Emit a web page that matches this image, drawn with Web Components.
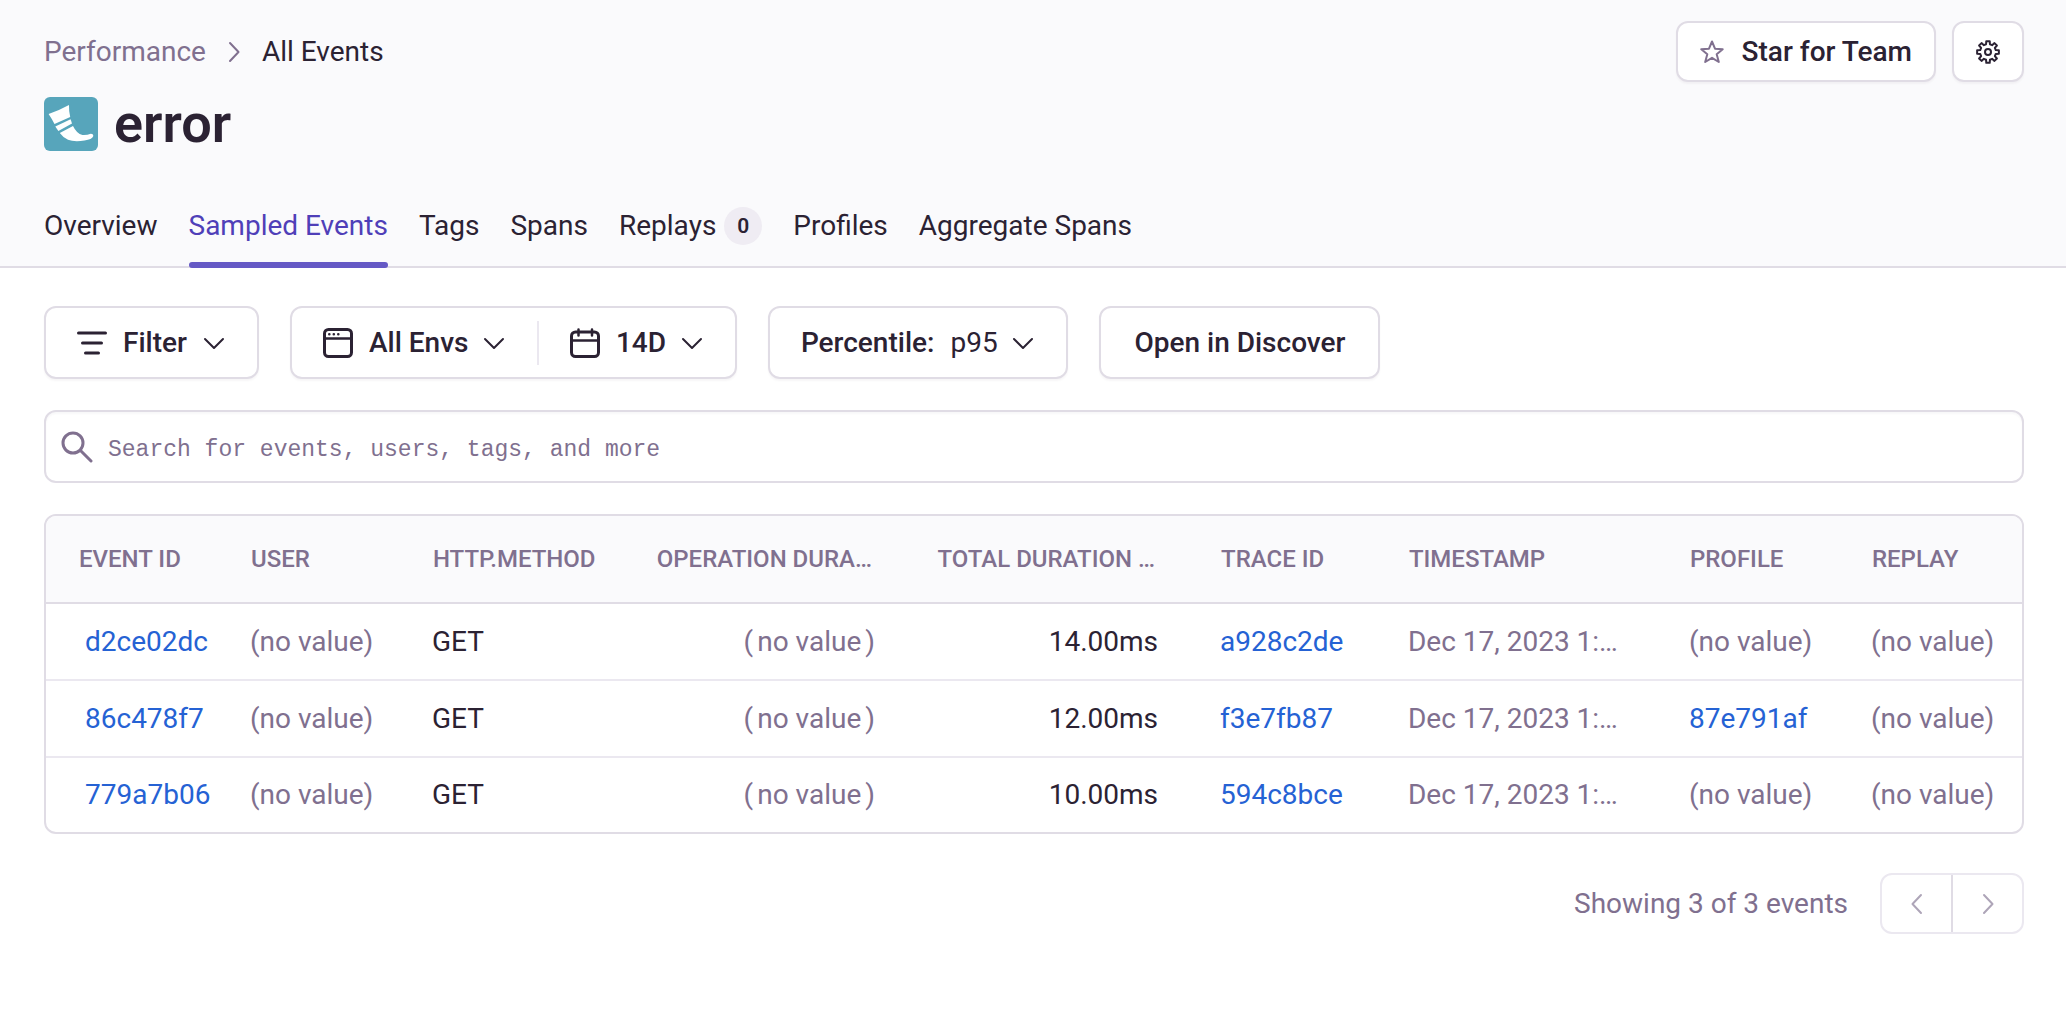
<!DOCTYPE html>
<html lang="en">
<head>
<meta charset="utf-8">
<title>error – All Events</title>
<meta name="viewport" content="width=device-width, initial-scale=1">
<style>
  :root {
    --text: #2b2233;
    --muted: #80708f;
    --link: #2562d4;
    --active: #4f3fb8;
    --accent: #6559c5;
    --border: #e0dce5;
    --inner-border: #ebe8f0;
    --panel: #fafafc;
  }
  html, body { margin: 0; min-height: 100%; background: #fff; }
  body { font: 400 28px/32px Roboto, "Liberation Sans", sans-serif; color: var(--text); }
</style>
</head>
<body>
<transaction-page></transaction-page>

<template id="t-page">
  <style>
    :host { display: block; }
    header { background: var(--panel); padding: 21px 42px 0 44px; box-shadow: inset 0 -2px var(--border); }
    .top, .title, .actions, .filters { display: flex; align-items: center; }
    .top { justify-content: space-between; }
    .actions { gap: 16px; }
    .title { gap: 16px; margin-top: 15px; }
    h1 { margin: 0; font-size: 54px; line-height: 54px; font-weight: 600; }
    .logo { display: block; width: 54px; height: 54px; }
    page-tabs { margin-top: 33px; }
    main { display: flex; flex-direction: column; gap: 31px; padding: 38px 42px 0 44px; }
    .filters { gap: 31px; }
    table-pager { margin-top: 8px; }
  </style>
  <header>
    <div class="top">
      <page-breadcrumbs></page-breadcrumbs>
      <div class="actions">
        <action-button icon="star">Star for Team</action-button>
        <action-button icon="gear" label="Settings"></action-button>
      </div>
    </div>
    <div class="title">
      <svg class="logo" viewBox="0 0 54 54" aria-hidden="true">
        <rect width="54" height="54" rx="6" fill="#57a5bb"/>
        <g fill="#fff">
          <path d="M4.6 17 Q15 13.500 25 8 Q24.800 14 26.200 20 L10.500 27 Q8 22 4.600 17Z"/>
          <path d="M11.300 29.500 L26.600 22.300 L28 26.500 L14.400 34 Z"/>
          <path d="M15.800 36 L29 29 Q32.500 36.500 38.500 38 Q43 38.300 46.800 36.700 Q49.700 36.800 49.200 39.300 Q48 42.500 40.500 43.600 Q30 45.200 24 42.800 Q19 40.500 15.800 36Z"/>
        </g>
      </svg>
      <h1>error</h1>
    </div>
    <page-tabs></page-tabs>
  </header>
  <main>
    <div class="filters">
      <filter-group><filter-button></filter-button></filter-group>
      <filter-group>
        <filter-select icon="window" value="All Envs" label="Environment"></filter-select>
        <filter-select icon="calendar" value="14D" label="Date range" divided></filter-select>
      </filter-group>
      <filter-group><filter-select value="p95" label="Percentile:" show-label></filter-select></filter-group>
      <filter-group><discover-link></discover-link></filter-group>
    </div>
    <event-search></event-search>
    <events-table></events-table>
    <table-pager></table-pager>
  </main>
</template>

<script>
const gearPath = (() => {
  const pts = [];
  for (let i = 0; i < 8; i++) {
    const base = i * 45 - 90;
    for (const [offset, radius] of [[-14, 8], [-9, 11], [9, 11], [14, 8]]) {
      const a = (base + offset) * Math.PI / 180;
      pts.push((12 + radius * Math.cos(a)).toFixed(2) + ' ' + (12 + radius * Math.sin(a)).toFixed(2));
    }
  }
  return 'M' + pts.join('L') + 'Z';
})();

const icon = (name, size, viewBox, body) =>
  `<svg class="${name}" width="${size}" height="${size}" viewBox="0 0 ${viewBox} ${viewBox}" fill="none" stroke="currentColor" stroke-linecap="round" stroke-linejoin="round" aria-hidden="true">${body}</svg>`;

const icons = {
  star: icon('star', 24, 24, '<path stroke-width="2" d="M12 1.500L15 8.700L22.700 9.200L16.700 14.200L18.800 22L12 17.800L5.200 22L7.300 14.200L1.300 9.200L9 8.700Z"/>'),
  gear: icon('gear', 24, 24, `<path stroke-width="2" d="${gearPath}"/><circle cx="12" cy="12" r="3" stroke-width="2"/>`),
  filter: icon('lines', 30, 30, '<path stroke-width="3" d="M1.500 5H28.500M5.500 15H24.500M8.500 25H21.500"/>'),
  window: icon('window', 30, 30, '<rect x="1.500" y="1.500" width="27" height="27" rx="4" stroke-width="3"/><path stroke-width="2.500" d="M2 10.500H28"/><path stroke-width="2.600" d="M6.300 6.200h.01M10.800 6.200h.01M15.300 6.200h.01"/>'),
  calendar: icon('calendar', 30, 30, '<rect x="1.500" y="4" width="27" height="24.500" rx="4" stroke-width="3"/><path stroke-width="2.500" d="M2 12.500H28M8.500 1.500V7.500M22 1.500V7.500"/>'),
  down: icon('down', 24, 24, '<path stroke-width="2" d="M3 8L12 17L21 8"/>'),
  left: icon('left', 24, 24, '<path stroke-width="2" d="M16 3L7.500 12L16 21"/>'),
  right: icon('right', 24, 24, '<path stroke-width="2" d="M8 3L16.500 12L8 21"/>'),
  search: icon('search', 32, 32, '<circle cx="12" cy="12" r="10" stroke-width="3"/><path stroke-width="3" d="M19.500 19.500L30 30"/>')
};

const shared = `<style>
  *, ::before, ::after { box-sizing: border-box; }
  button, select, input { font: inherit; color: inherit; background: none; border: 0; margin: 0; padding: 0; border-radius: 0; outline: 0; appearance: none; }
  button, select { cursor: pointer; }
  a { color: inherit; text-decoration: none; }
  svg { display: block; flex: none; }
</style>`;

const define = (name, render) => customElements.define(name, class extends HTMLElement {
  connectedCallback() {
    if (this.shadowRoot) return;
    this.attachShadow({ mode: 'open' }).innerHTML = shared + render(this);
  }
});

define('page-breadcrumbs', () => `
  <style>
    :host { display: block; }
    nav { display: flex; align-items: center; gap: 16px; }
    a, svg { color: var(--muted); }
  </style>
  <nav aria-label="Breadcrumb"><a href="#">Performance</a>${icons.right}<span aria-current="page">All Events</span></nav>`);

define('action-button', el => `
  <style>
    :host { display: block; }
    button { display: flex; align-items: center; justify-content: center; gap: 18px; height: 61px; padding: 0 22px; font-weight: 500; background: #fff; border: 2px solid var(--border); border-radius: 12px; box-shadow: 0 2px 2px rgba(43, 34, 51, .04); }
    .star { color: var(--muted); }
  </style>
  <button type="button"${el.getAttribute('label') ? ` aria-label="${el.getAttribute('label')}"` : ''}>${icons[el.getAttribute('icon')]}${el.getAttribute('label') ? '' : '<slot></slot>'}</button>`);

define('page-tabs', () => {
  const tabs = ['Overview', 'Sampled Events', 'Tags', 'Spans', 'Replays', 'Profiles', 'Aggregate Spans'];
  return `
  <style>
    :host { display: block; }
    nav { display: flex; gap: 31px; }
    a { position: relative; display: flex; align-items: center; gap: 8px; height: 84px; white-space: nowrap; }
    a[aria-current] { color: var(--active); }
    a[aria-current]::after { content: ""; position: absolute; left: 0; right: 0; bottom: 0; height: 6px; border-radius: 3px; background: var(--accent); }
    .badge { display: grid; place-items: center; width: 38px; height: 38px; border-radius: 50%; background: #efecf3; font-size: 21px; font-weight: 600; }
  </style>
  <nav>${tabs.map(t => `<a href="#"${t === 'Sampled Events' ? ' aria-current="page"' : ''}>${t}${t === 'Replays' ? '<span class="badge">0</span>' : ''}</a>`).join('')}</nav>`;
});

define('filter-group', () => `
  <style>
    :host { display: flex; align-items: center; box-sizing: border-box; height: 73px; background: #fff; border: 2px solid var(--border); border-radius: 12px; box-shadow: 0 2px 2px rgba(43, 34, 51, .04); font-weight: 500; white-space: nowrap; }
  </style><slot></slot>`);

define('filter-button', () => `
  <style>
    :host { display: block; }
    button { display: flex; align-items: center; gap: 16px; height: 69px; padding: 0 31px; }
    .down { margin-left: -1px; }
  </style>
  <button type="button">${icons.filter}Filter${icons.down}</button>`);

define('filter-select', el => {
  const shown = el.hasAttribute('show-label');
  const label = el.getAttribute('label');
  return `
  <style>
    :host { display: flex; align-items: center; }
    :host([divided])::before { content: ""; width: 2px; height: 44px; background: var(--inner-border); }
    label { display: flex; align-items: center; gap: 16px; padding: 0 31px; }
    .down { margin-left: -3px; }
    select { line-height: 32px; }
    .light { font-weight: 400; }
  </style>
  <label>${shown ? `<span>${label}</span>` : icons[el.getAttribute('icon')]}<select${shown ? ' class="light"' : ` aria-label="${label}"`}><option>${el.getAttribute('value')}</option></select>${icons.down}</label>`;
});

define('discover-link', () => `
  <style>
    :host { display: block; }
    a { display: block; padding: 0 33px; }
  </style>
  <a href="#">Open in Discover</a>`);

define('event-search', () => `
  <style>
    :host { display: block; }
    label { display: flex; align-items: center; gap: 15px; height: 73px; padding: 0 15px; border: 2px solid var(--border); border-radius: 12px; box-shadow: inset 0 2px 2px rgba(43, 34, 51, .03); color: var(--muted); }
    input { flex: 1; min-width: 0; padding-top: 6px; font: 400 23px/32px "Liberation Mono", monospace; color: var(--text); }
    input::placeholder { color: var(--muted); opacity: 1; }
  </style>
  <label>${icons.search}<input type="text" aria-label="Search events" placeholder="Search for events, users, tags, and more"></label>`);

define('events-table', () => {
  const columns = [['EVENT ID', 172], ['USER', 182], ['HTTP.METHOD', 226], ['OPERATION DURA…', 279, 1], ['TOTAL DURATION …', 283, 1], ['TRACE ID', 188], ['TIMESTAMP', 281], ['PROFILE', 182], ['REPLAY', 183]];
  const total = columns.reduce((sum, c) => sum + c[1], 0);
  const none = '<span class="muted">(no value)</span>';
  const spaced = '<span class="muted">(<span class="inset">no value</span>)</span>';
  const link = id => `<a href="#">${id}</a>`;
  const rows = [['d2ce02dc', '14.00ms', 'a928c2de', null], ['86c478f7', '12.00ms', 'f3e7fb87', '87e791af'], ['779a7b06', '10.00ms', '594c8bce', null]];
  return `
  <style>
    :host { display: block; border: 2px solid var(--border); border-radius: 12px; overflow: hidden; }
    table { width: 100%; table-layout: fixed; border-collapse: separate; border-spacing: 0; }
    th, td { text-align: left; white-space: nowrap; padding: 0 0 0 32px; font-weight: 400; }
    th { height: 88px; padding-left: 33px; background: var(--panel); border-bottom: 2px solid var(--border); color: var(--muted); font-size: 24px; font-weight: 500; }
    td { height: 77px; border-bottom: 2px solid var(--inner-border); }
    tr:last-child td { height: 74px; border-bottom: 0; }
    td:first-child { padding-left: 39px; }
    th.num, td.num { text-align: right; padding: 0 30px 0 0; }
    th.num { padding-right: 33px; }
    a { color: var(--link); }
    .muted { color: var(--muted); }
    .inset { padding: 0 4px; }
  </style>
  <table>
    <colgroup>${columns.map(c => `<col style="width:${(c[1] / total * 100).toFixed(2)}%">`).join('')}</colgroup>
    <thead><tr>${columns.map(c => `<th scope="col"${c[2] ? ' class="num"' : ''}>${c[0]}</th>`).join('')}</tr></thead>
    <tbody>${rows.map(r => `<tr><td>${link(r[0])}</td><td>${none}</td><td>GET</td><td class="num">${spaced}</td><td class="num">${r[1]}</td><td>${link(r[2])}</td><td><span class="muted">Dec 17, 2023 1:…</span></td><td>${r[3] ? link(r[3]) : none}</td><td>${none}</td></tr>`).join('')}</tbody>
  </table>`;
});

define('table-pager', () => `
  <style>
    :host { display: flex; align-items: center; justify-content: flex-end; gap: 32px; color: var(--muted); }
    .pages { display: flex; border: 2px solid var(--inner-border); border-radius: 12px; }
    button { display: grid; place-items: center; width: 69px; height: 57px; color: #aea5b8; }
    button + button { width: 71px; border-left: 2px solid var(--border); }
  </style>
  <span>Showing 3 of 3 events</span>
  <div class="pages"><button type="button" aria-label="Previous" disabled>${icons.left}</button><button type="button" aria-label="Next" disabled>${icons.right}</button></div>`);

customElements.define('transaction-page', class extends HTMLElement {
  connectedCallback() {
    if (this.shadowRoot) return;
    this.attachShadow({ mode: 'open' }).append(document.getElementById('t-page').content.cloneNode(true));
  }
});
</script>
</body>
</html>
